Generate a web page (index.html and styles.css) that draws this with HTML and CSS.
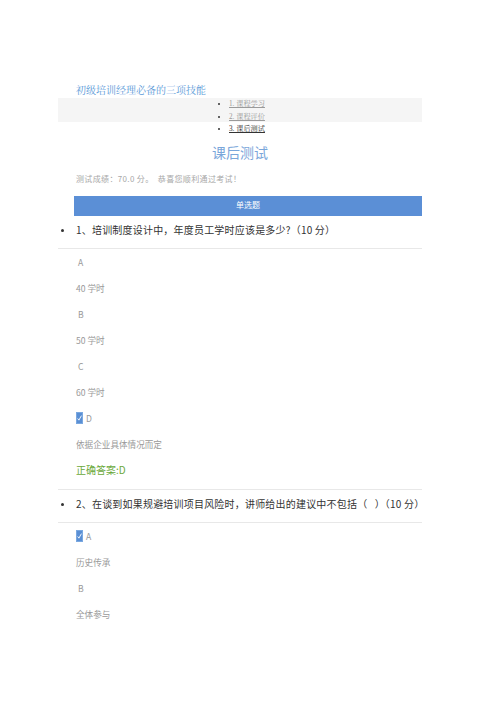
FILE: index.html
```html
<!DOCTYPE html>
<html lang="zh-CN">
<head>
<meta charset="utf-8">
<title>课后测试</title>
<link rel="stylesheet" href="styles.css">
</head>
<body>
<div class="page">
  <div class="title">初级培训经理必备的三项技能</div>
  <div class="nav">
    <ul class="nav-list">
      <li><a class="nav-link">1. 课程学习</a></li>
      <li><a class="nav-link">2. 课程评价</a></li>
      <li><a class="nav-link current">3. 课后测试</a></li>
    </ul>
  </div>
  <h1 class="heading">课后测试</h1>
  <p class="score">测试成绩：70.0 分。&nbsp; 恭喜您顺利通过考试！</p>
  <div class="bar">单选题</div>
  <ul class="questions">
    <li class="question">
      <div class="q-text">1、培训制度设计中，年度员工学时应该是多少?（10 分）</div>
      <div class="options">
        <div class="opt label">&nbsp;A</div>
        <div class="opt">40 学时</div>
        <div class="opt label">&nbsp;B</div>
        <div class="opt">50 学时</div>
        <div class="opt label">&nbsp;C</div>
        <div class="opt">60 学时</div>
        <div class="opt label"><span class="check"><svg width="6" height="8" viewBox="0 0 6 8"><path d="M0.8 4.6 L2.3 6.6 L5.3 1.2" fill="none" stroke="#fff" stroke-width="1.1"/></svg></span>D</div>
        <div class="opt">依据企业具体情况而定</div>
        <div class="opt answer">正确答案:D</div>
      </div>
    </li>
    <li class="question">
      <div class="q-text">2、在谈到如果规避培训项目风险时，讲师给出的建议中不包括（&nbsp;&nbsp;&nbsp;）（10 分）</div>
      <div class="options">
        <div class="opt label"><span class="check"><svg width="6" height="8" viewBox="0 0 6 8"><path d="M0.8 4.6 L2.3 6.6 L5.3 1.2" fill="none" stroke="#fff" stroke-width="1.1"/></svg></span>A</div>
        <div class="opt">历史传承</div>
        <div class="opt label">&nbsp;B</div>
        <div class="opt">全体参与</div>
      </div>
    </li>
  </ul>
</div>
</body>
</html>
```
FILE: styles.css
```css
html, body {
  margin: 0;
  padding: 0;
  background: #ffffff;
}
body {
  font-family: "Noto Sans CJK SC", "Noto Sans", sans-serif;
  color: #333333;
}
.page {
  width: 364px;
  margin-left: 58px;
  padding-top: 84px;
}
.title {
  font-family: "Liberation Serif", "Noto Serif CJK SC", "Noto Sans CJK SC", serif;
  font-size: 10px;
  line-height: 14px;
  color: #5b9ad8;
  padding-left: 18px;
}
.nav {
  background: linear-gradient(#f5f5f5 0, #f5f5f5 24px, transparent 24px);
}
.nav-list {
  list-style: disc;
  margin: 0;
  padding: 0 0 0 171px;
  font-family: "Liberation Serif", "Noto Serif CJK SC", "Noto Sans CJK SC", serif;
  font-size: 7.2px;
  line-height: 12.5px;
}
.nav-link {
  color: #9a9a9a;
  text-decoration: underline;
}
.nav-link.current {
  color: #333333;
}
.heading {
  margin: 4px 0 0;
  text-align: center;
  font-weight: normal;
  font-size: 14px;
  line-height: 24px;
  color: #7aa6da;
}
.score {
  margin: 7px 0 0 18px;
  font-size: 8px;
  line-height: 16px;
  letter-spacing: 0.35px;
  color: #a8a8a8;
}
.bar {
  margin: 9px 0 0 16px;
  height: 20px;
  line-height: 18px;
  background: #5b8fd6;
  color: #ffffff;
  font-size: 8px;
  text-align: center;
}
.questions {
  list-style: none;
  margin: 0;
  padding: 0;
}
.question {
  border-bottom: 1px solid #e8e8e8;
}
.question:last-child {
  border-bottom: none;
}
.q-text {
  position: relative;
  padding-left: 18px;
  padding-bottom: 4px;
  height: 28px;
  line-height: 28px;
  font-size: 10px;
  letter-spacing: 0.2px;
  color: #333333;
  border-bottom: 1px solid #e8e8e8;
  white-space: nowrap;
}
.q-text::before {
  content: "";
  position: absolute;
  left: 3px;
  top: 13px;
  width: 3px;
  height: 3px;
  border-radius: 50%;
  background: #333333;
}
.options {
  padding-left: 18px;
  padding-bottom: 6px;
}
.opt {
  height: 26px;
  line-height: 26px;
  font-size: 8.6px;
  color: #999999;
  display: flex;
  align-items: center;
}
.opt.answer {
  font-size: 10px;
  color: #6aa83a;
}
.check {
  display: inline-flex;
  align-items: center;
  justify-content: center;
  width: 7px;
  height: 12px;
  background: #5a8fd4;
  border: 1px solid #7aa8e0;
  box-sizing: border-box;
  margin-right: 3px;
}
.check svg {
  display: block;
}
```
